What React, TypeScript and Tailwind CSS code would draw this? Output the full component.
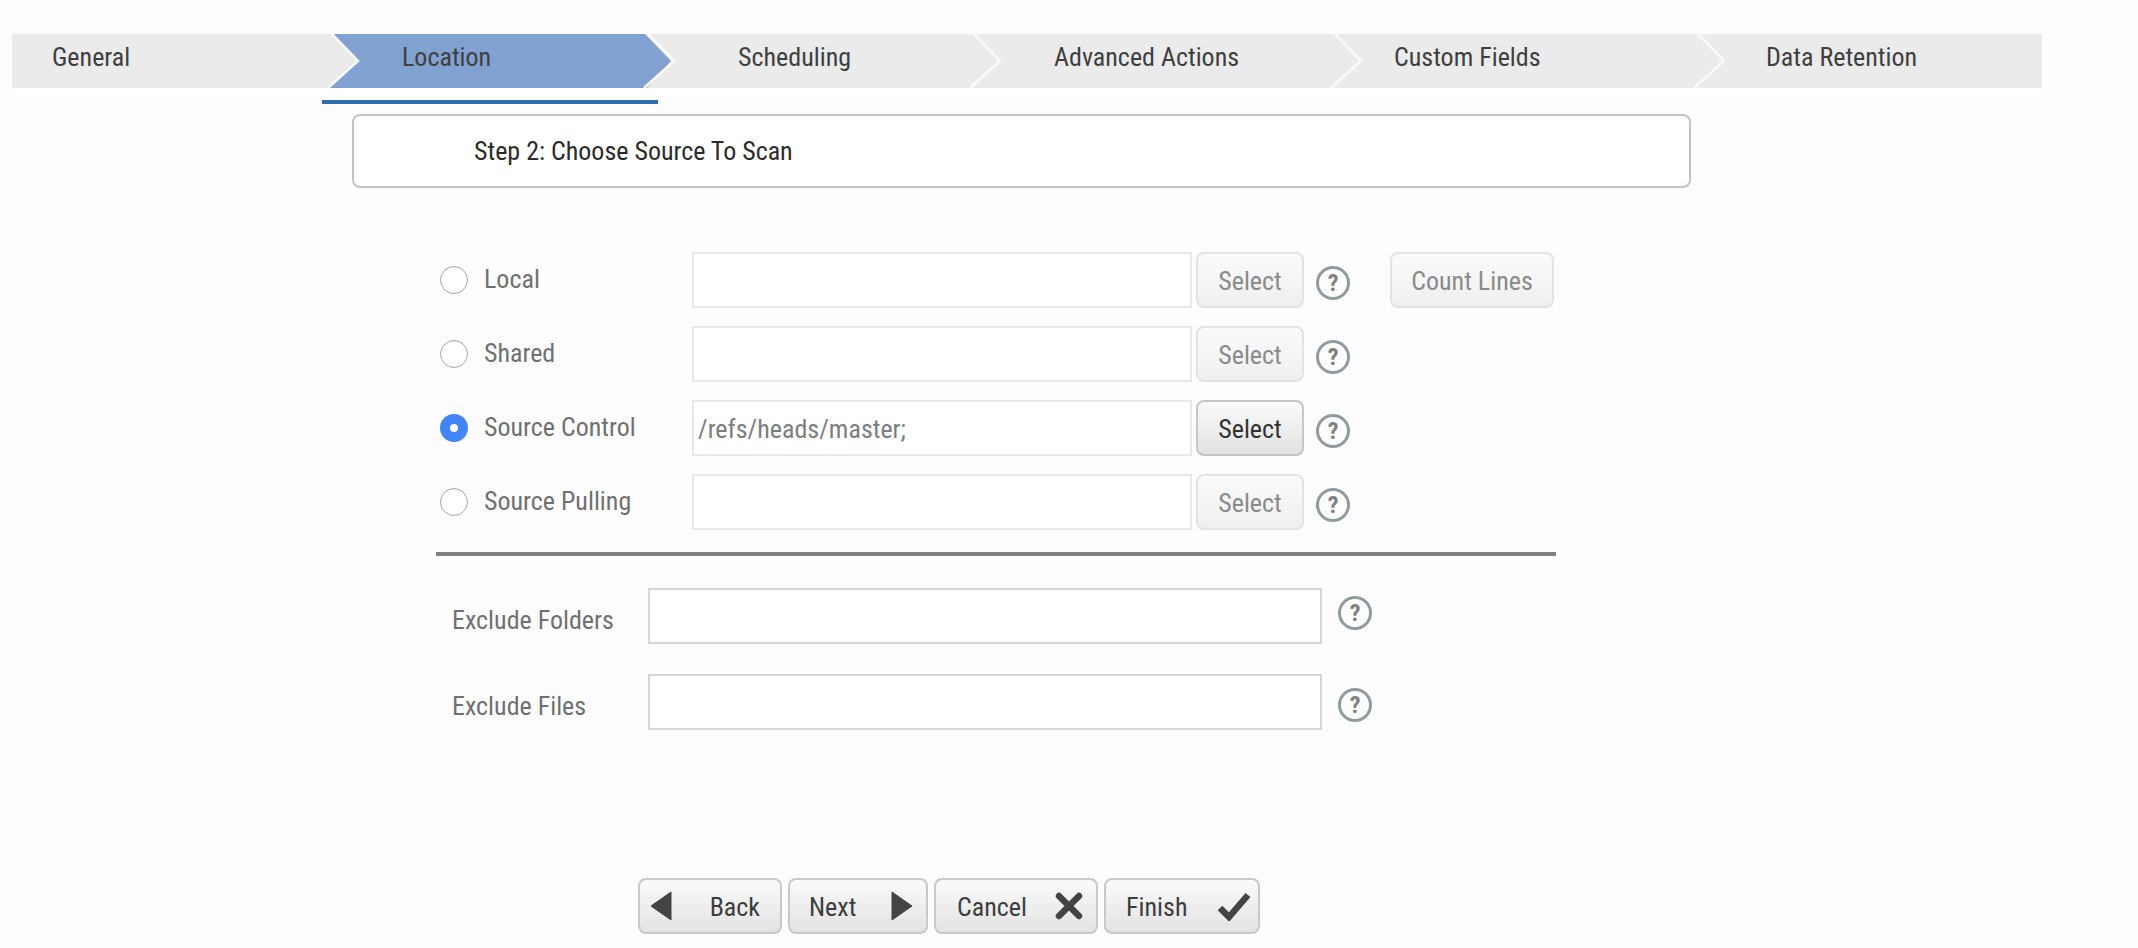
import React from "react";

const font = "font-['Roboto',sans-serif] text-[26px] leading-[30px] [font-stretch:87%]";

const tabs = [
  { label: "General", w: "w-[319px]", pl: "pl-[40px]", active: false },
  { label: "Location", w: "w-[316px]", pl: "pl-[71px]", active: true },
  { label: "Scheduling", w: "w-[326px]", pl: "pl-[91px]", active: false },
  { label: "Advanced Actions", w: "w-[361px]", pl: "pl-[81px]", active: false },
  { label: "Custom Fields", w: "w-[363px]", pl: "pl-[60px]", active: false },
  { label: "Data Retention", w: "w-[345px]", pl: "pl-[69px]", active: false },
];

function Chevron() {
  return (
    <svg className="absolute -left-[4px] top-0 z-10" width="36" height="54" viewBox="0 0 36 54">
      <path d="M1 54 L31 27 L5 0" fill="none" stroke="#fbfbfb" strokeWidth="2.5" />
    </svg>
  );
}

function Stepper() {
  return (
    <div className="flex h-[54px] ml-[12px] w-[2030px] bg-[#ebebeb]">
      {tabs.map((t, i) => (
        <div key={t.label} className={`relative h-full flex items-center pb-[8px] ${t.w} ${t.pl} ${font} text-[#3f3f3f]`}>
          {i > 0 && <Chevron />}
          {t.active && (
            <div className="absolute -left-[4px] top-0 h-full w-[344px] bg-[#81a1d0] [clip-path:polygon(5px_0,318px_0,344px_50%,320px_100%,0_100%,30px_50%)]" />
          )}
          <span className="relative z-20">{t.label}</span>
        </div>
      ))}
    </div>
  );
}

function Help({ className = "" }: { className?: string }) {
  return (
    <div
      className={`w-[34px] h-[34px] shrink-0 rounded-full border-[3px] border-[#8f9aa1] flex items-center justify-center font-['Roboto',sans-serif] font-bold text-[24px] leading-none [font-stretch:80%] text-[#808080] ${className}`}
    >
      ?
    </div>
  );
}

function Radio({ checked }: { checked?: boolean }) {
  return checked ? (
    <div className="w-[28px] h-[28px] shrink-0 rounded-full bg-[#4285f4] flex items-center justify-center">
      <div className="w-[8px] h-[8px] rounded-full bg-white" />
    </div>
  ) : (
    <div className="w-[28px] h-[28px] shrink-0 rounded-full bg-white border-[1.5px] border-[#a8a8a8] shadow-[inset_0_1px_1px_rgba(0,0,0,0.06)]" />
  );
}

function SmallButton({ label, enabled, className = "" }: { label: string; enabled?: boolean; className?: string }) {
  return (
    <div
      className={`h-[56px] shrink-0 rounded-[8px] border-2 flex items-center justify-center pt-[2px] ${font} ${
        enabled
          ? "border-[#c6c6c6] bg-gradient-to-b from-[#fafafa] to-[#e2e2e2] text-[#333333]"
          : "border-[#e3e3e3] bg-gradient-to-b from-[#fbfbfb] to-[#efefef] text-[#8a8a8a]"
      } ${className}`}
    >
      {label}
    </div>
  );
}

function TextBox({ value, className = "" }: { value?: string; className?: string }) {
  return (
    <input
      readOnly
      value={value ?? ""}
      className={`bg-white border-2 px-[4px] pt-[2px] outline-none ${font} text-[#7d7d7d] ${className}`}
    />
  );
}

function SourceRow({ label, value, checked, extra }: { label: string; value?: string; checked?: boolean; extra?: boolean }) {
  return (
    <div className="flex items-center h-[56px]">
      <div className="pl-[4px] flex items-center gap-[16px] w-[256px] shrink-0">
        <Radio checked={checked} />
        <span className={`${font} text-[#707070] -translate-y-px`}>{label}</span>
      </div>
      <TextBox value={value} className="w-[500px] h-[56px] border-[#e8e8e8]" />
      <SmallButton label="Select" enabled={checked} className="w-[108px] ml-[4px]" />
      <Help className="ml-[12px] mt-[6px]" />
      {extra && <SmallButton label="Count Lines" className="w-[164px] ml-[40px]" />}
    </div>
  );
}

function ExcludeRow({ label, labelClass, helpClass }: { label: string; labelClass: string; helpClass: string }) {
  return (
    <div className="flex items-center pl-[16px] h-[56px]">
      <span className={`w-[196px] shrink-0 ${font} text-[#707070] ${labelClass}`}>{label}</span>
      <TextBox className="w-[674px] h-[56px] border-[#d6d6d6]" />
      <Help className={`ml-[16px] ${helpClass}`} />
    </div>
  );
}

function NavButton({ className, children }: { className: string; children: React.ReactNode }) {
  return (
    <div
      className={`h-[56px] shrink-0 rounded-[8px] border-2 border-[#c8c8c8] bg-gradient-to-b from-[#fafafa] to-[#e3e3e3] flex items-center justify-between ${font} text-[#3d3d3d] ${className}`}
    >
      {children}
    </div>
  );
}

export default function App() {
  return (
    <div className="min-h-screen bg-[#fdfdfd] pt-[34px]">
      <Stepper />
      <div className="h-[12px] ml-[12px] w-[2030px] bg-white" />
      <div className="h-[4px] ml-[322px] w-[336px] bg-[#2f6cb0]" />
      <div className={`mt-[10px] ml-[352px] w-[1339px] h-[74px] rounded-[8px] border-2 border-[#bfc4c9] bg-white flex items-center pl-[120px] ${font} text-[#2b2b2b]`}>
        Step 2: Choose Source To Scan
      </div>

      <div className="mt-[64px] ml-[436px] w-[1120px]">
        <div className="flex flex-col gap-[18px]">
          <SourceRow label="Local" extra />
          <SourceRow label="Shared" />
          <SourceRow label="Source Control" value="/refs/heads/master;" checked />
          <SourceRow label="Source Pulling" />
        </div>
        <div className="mt-[22px] h-[4px] bg-[#808080]" />
        <div className="mt-[32px] flex flex-col gap-[30px]">
          <ExcludeRow label="Exclude Folders" labelClass="translate-y-[4px]" helpClass="-translate-y-[3px]" />
          <ExcludeRow label="Exclude Files" labelClass="translate-y-[4px]" helpClass="translate-y-[3px]" />
        </div>
      </div>

      <div className="mt-[148px] ml-[638px] flex">
        <NavButton className="w-[144px] pl-[10px] pr-[20px]">
          <svg width="22" height="30" viewBox="0 0 22 30"><path d="M21 1 L1 15 L21 29 Z" fill="#444444" stroke="#444444" strokeLinejoin="round" /></svg>
          <span className="pt-[2px]">Back</span>
        </NavButton>
        <NavButton className="w-[140px] ml-[6px] pl-[19px] pr-[13px]">
          <span className="pt-[2px]">Next</span>
          <svg width="22" height="30" viewBox="0 0 22 30"><path d="M1 1 L21 15 L1 29 Z" fill="#444444" stroke="#444444" strokeLinejoin="round" /></svg>
        </NavButton>
        <NavButton className="w-[164px] ml-[6px] pl-[21px] pr-[12px]">
          <span className="pt-[2px]">Cancel</span>
          <svg width="30" height="30" viewBox="0 0 30 30"><path d="M5 5 L25 25 M25 5 L5 25" fill="none" stroke="#444444" strokeWidth="6.5" strokeLinecap="round" /></svg>
        </NavButton>
        <NavButton className="w-[156px] ml-[6px] pl-[20px] pr-[7px]">
          <span className="pt-[2px]">Finish</span>
          <svg width="34" height="30" viewBox="0 0 34 30"><path d="M3 17 L12 26 L31 4" fill="none" stroke="#444444" strokeWidth="6.5" /></svg>
        </NavButton>
      </div>
    </div>
  );
}
